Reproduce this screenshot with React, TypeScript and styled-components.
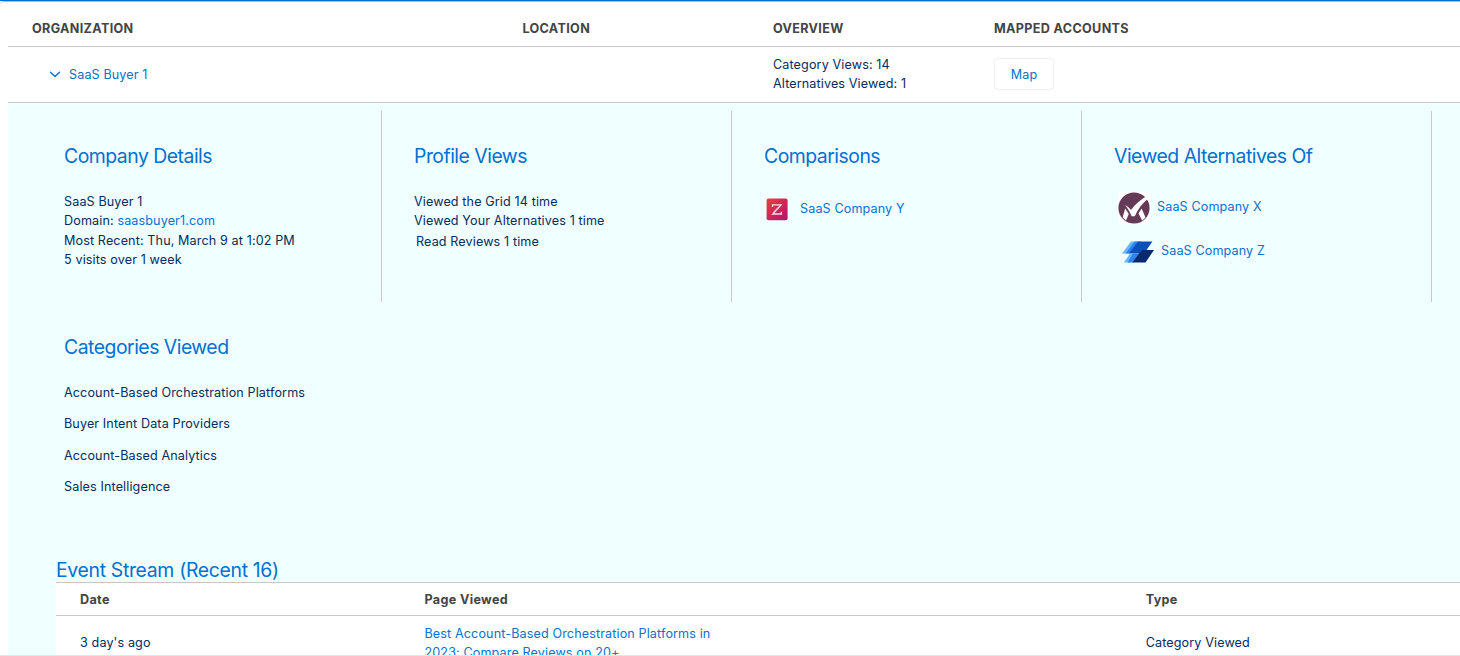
import React from "react";
import styled, { createGlobalStyle } from "styled-components";

const GlobalStyle = createGlobalStyle`
  * { box-sizing: border-box; }
  body {
    margin: 0;
    background: #fff;
    color: #032d60;
    font: 400 12.6px/19.5px Inter, "Liberation Sans", sans-serif;
    letter-spacing: 0.12px;
  }
  h2, p, ul { margin: 0; padding: 0; }
`;

const Page = styled.main`
  width: 100%;
  height: 656px;
  overflow: hidden;
  border-top: 1px solid #0070d2;
  border-bottom: 1px solid #e5e5e5;
  display: flex;
  flex-direction: column;
`;

const Card = styled.section`
  flex: 1;
  min-height: 0;
  overflow: hidden;
  padding-left: 8px;
  border-top: 1px solid #a9c3df;
  border-top-left-radius: 4px;
`;

const AccountRow = styled.div<{ $header?: boolean }>`
  display: grid;
  grid-template-columns: 490.4px 250.6px 221px 1fr;
  align-items: center;
  height: ${(p) => (p.$header ? 45 : 56)}px;
  padding: ${(p) => (p.$header ? "10px 0 0" : "0 0 0.8px")} 24px;
  border-bottom: 1px solid #c9c7c5;
`;

const ColumnTitle = styled.span`
  color: #444;
  font-weight: 700;
  white-space: nowrap;
  letter-spacing: 0.34px;
`;

const Line = styled.p`
  white-space: nowrap;
`;

const Link = styled.a`
  color: #0b70d1;
`;

const Organization = styled.div`
  display: flex;
  align-items: center;
  gap: 8px;
  padding: 1px 0 0 17px;
`;

const MapButton = styled.button`
  width: 60px;
  height: 32px;
  padding: 1px 0 0;
  border: 1px solid #f0efee;
  border-radius: 4px;
  background: #fff;
  color: #0b70d1;
  font: inherit;
  letter-spacing: inherit;
`;

const Details = styled.div`
  height: 600px;
  padding: 8px 0 0 24px;
  background: #f0ffff;
`;

const Cells = styled.div`
  display: flex;
  flex-wrap: wrap;
  width: 1400px;
`;

const Cell = styled.section<{ $plain?: boolean }>`
  width: 350px;
  height: 191px;
  padding: 30px 0 0 32px;
  border-right: ${(p) => (p.$plain ? "none" : "1px solid #c9c7c5")};
`;

const Heading = styled.h2`
  color: #0070d2;
  font-size: 19.4px;
  font-weight: 400;
  line-height: 30px;
  white-space: nowrap;
  letter-spacing: -0.5px;
`;

const CellBody = styled.div`
  padding-top: 20.6px;
`;

const OffsetLine = styled(Line)`
  padding: 1px 0 0 2px;
`;

const Company = styled.div<{ $top: number; $left: number; $gap: number; $lift: number }>`
  display: flex;
  align-items: center;
  gap: ${(p) => p.$gap}px;
  margin: ${(p) => p.$top}px 0 0 ${(p) => p.$left}px;
  a { padding-bottom: ${(p) => p.$lift}px; }
  svg { display: block; flex: none; }
`;

const Categories = styled.ul`
  display: grid;
  gap: 11.8px;
  padding-top: 21px;
  list-style: none;
`;

const Stream = styled.section`
  margin: 62px 0 0 24px;
`;

const StreamHeading = styled(Heading)`
  height: 27px;
  letter-spacing: -0.32px;
`;

const StreamTable = styled.div`
  border-top: 1px solid #c9c7c5;
  background: #fff;
`;

const StreamRow = styled.div<{ $header?: boolean }>`
  display: grid;
  grid-template-columns: 344.5px 721.2px 1fr;
  align-items: center;
  height: ${(p) => (p.$header ? 33 : 56)}px;
  padding: ${(p) => (p.$header ? "2px 0 0" : "0 0 1px")} 24px;
  border-bottom: 1px solid #c9c7c5;
`;

const PageTitle = styled.div`
  width: 300px;
`;

const Chevron = () => (
  <svg width="12" height="12" viewBox="0 0 12 12" fill="none">
    <path d="M1.5 3.2 6 7.5l4.5-4.3" stroke="#0b70d1" strokeWidth="1.4" strokeLinecap="round" strokeLinejoin="round" />
  </svg>
);

const LogoY = () => (
  <svg width="22" height="23" viewBox="0 0 22 23">
    <defs>
      <linearGradient id="logo-y" x1="0" y1="0" x2="1" y2="1">
        <stop offset="0" stopColor="#ea3f3b" />
        <stop offset="0.5" stopColor="#cf2857" />
        <stop offset="1" stopColor="#aa1670" />
      </linearGradient>
    </defs>
    <rect x="0.6" y="0.6" width="21" height="21.6" rx="2" fill="url(#logo-y)" />
    <path d="M6.5 9V6.900h8.500L6.700 16h8.700v-2.200" fill="none" stroke="#ffd9e6" strokeWidth="1.3" />
    <path d="m7.500 14.200 6-6" stroke="#ffd9e6" strokeWidth="0.9" />
  </svg>
);

const LogoX = () => (
  <svg width="32" height="32" viewBox="0 0 32 32">
    <path fill="#fff" d="M0 0h32v32H0z" />
    <circle cx="16" cy="16" r="15.6" fill="#643a57" />
    <path fill="#fff" d="M7 13.300c2.600 1 4.500 2.500 6 4.700C17.400 12 22.500 7.500 28.500 4.200l1.700 2.200C24.500 11 20 16.800 16.800 24.300h-3.200C12 20.200 10 16.600 7 13.300Z" />
    <path fill="#fff" d="M7.200 16.500 10.800 22 8 28.500 4.600 25.500ZM23.600 16.500 27.500 25.500 24.200 28.500 20.500 21.500Z" />
  </svg>
);

const LogoZ = () => (
  <svg width="32" height="22" viewBox="0 0 32 22">
    <path fill="#67b7fb" d="M9 .5h7L7 12.5H0Z" />
    <path fill="#2e83ec" d="M12.5 .5h7L10.5 12.5h-7Z" />
    <path fill="#0c50bb" d="M16 .5h14.5L22 12.5H7Z" />
    <path fill="#67b7fb" d="M8 12.5h6L8.5 21.5H2Z" />
    <path fill="#2e83ec" d="M11 12.5h7L12 21.5H5.5Z" />
    <path fill="#08286f" d="M17 12.5 20.5 9H32L23.5 21.5H10.5Z" />
  </svg>
);

export default function App() {
  return (
    <>
      <GlobalStyle />
      <Page>
        <Card>
          <AccountRow $header>
            <ColumnTitle>ORGANIZATION</ColumnTitle>
            <ColumnTitle>LOCATION</ColumnTitle>
            <ColumnTitle>OVERVIEW</ColumnTitle>
            <ColumnTitle>MAPPED ACCOUNTS</ColumnTitle>
          </AccountRow>
          <AccountRow>
            <Organization>
              <Chevron />
              <Link>SaaS Buyer 1</Link>
            </Organization>
            <span />
            <div>
              <Line>Category Views: 14</Line>
              <Line>Alternatives Viewed: 1</Line>
            </div>
            <MapButton>Map</MapButton>
          </AccountRow>
          <Details>
            <Cells>
              <Cell>
                <Heading>Company Details</Heading>
                <CellBody>
                  <Line>SaaS Buyer 1</Line>
                  <Line>Domain: <Link>saasbuyer1.com</Link></Line>
                  <Line>Most Recent: Thu, March 9 at 1:02 PM</Line>
                  <Line>5 visits over 1 week</Line>
                </CellBody>
              </Cell>
              <Cell>
                <Heading>Profile Views</Heading>
                <CellBody>
                  <Line>Viewed the Grid 14 time</Line>
                  <Line>Viewed Your Alternatives 1 time</Line>
                  <OffsetLine>Read Reviews 1 time</OffsetLine>
                </CellBody>
              </Cell>
              <Cell>
                <Heading>Comparisons</Heading>
                <Company $top={27} $left={2} $gap={12} $lift={2}>
                  <LogoY />
                  <Link>SaaS Company Y</Link>
                </Company>
              </Cell>
              <Cell>
                <Heading>Viewed Alternatives Of</Heading>
                <Company $top={21} $left={4} $gap={7} $lift={3}>
                  <LogoX />
                  <Link>SaaS Company X</Link>
                </Company>
                <Company $top={17} $left={8} $gap={7} $lift={3}>
                  <LogoZ />
                  <Link>SaaS Company Z</Link>
                </Company>
              </Cell>
              <Cell $plain>
                <Heading>Categories Viewed</Heading>
                <Categories>
                  <li><Line>Account-Based Orchestration Platforms</Line></li>
                  <li><Line>Buyer Intent Data Providers</Line></li>
                  <li><Line>Account-Based Analytics</Line></li>
                  <li><Line>Sales Intelligence</Line></li>
                </Categories>
              </Cell>
            </Cells>
            <Stream>
              <StreamHeading>Event Stream (Recent 16)</StreamHeading>
              <StreamTable>
                <StreamRow $header>
                  <ColumnTitle>Date</ColumnTitle>
                  <ColumnTitle>Page Viewed</ColumnTitle>
                  <ColumnTitle>Type</ColumnTitle>
                </StreamRow>
                <StreamRow>
                  <Line>3 day's ago</Line>
                  <PageTitle><Link>Best Account-Based Orchestration Platforms in 2023: Compare Reviews on 20+</Link></PageTitle>
                  <Line>Category Viewed</Line>
                </StreamRow>
              </StreamTable>
            </Stream>
          </Details>
        </Card>
      </Page>
    </>
  );
}
